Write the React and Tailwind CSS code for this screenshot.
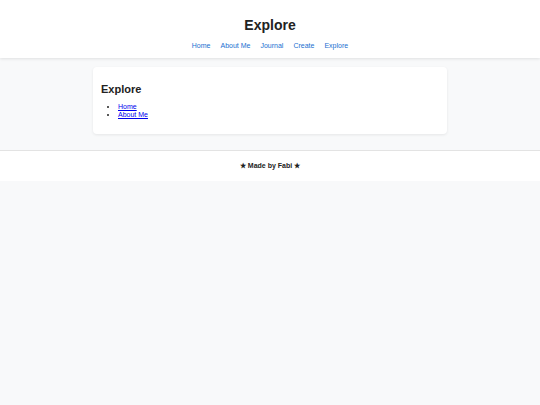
import React from "react";

const links = ["Home", "About Me", "Journal", "Create", "Explore"];

const App = () => {
  return (
    <div
      className="min-h-screen bg-[#f8f9fa] text-[#222]"
      style={{ fontFamily: '"Liberation Sans", Arial, sans-serif' }}
    >
      {/* header */}
      <header className="h-[58px] bg-white shadow-[0_1px_3px_rgba(0,0,0,0.1)] flex flex-col items-center pt-[16px] relative">
        <h1 className="text-[14px] leading-[18px] font-bold">Explore</h1>
        <nav className="mt-[7px] flex gap-x-[10px] text-[7px] leading-[9px]">
          {links.map((item, index) => (
            <a key={index} href="#" className="text-[#1a6fd0]">
              {item}
            </a>
          ))}
        </nav>
      </header>

      {/* main */}
      <main className="pt-[9px] pb-[16px]">
        <div className="w-[354px] mx-auto bg-white rounded-[4px] shadow-[0_1px_3px_rgba(0,0,0,0.08)] px-[8px] pt-[15px] pb-[15px]">
          <h2 className="text-[11px] leading-[14px] font-bold">Explore</h2>
          <ul className="mt-[7px] list-disc pl-[17px] text-[7px] leading-[8px]">
            <li>
              <a href="#" className="text-[#0000ee] underline">
                Home
              </a>
            </li>
            <li>
              <a href="#" className="text-[#0000ee] underline">
                About Me
              </a>
            </li>
          </ul>
        </div>
      </main>

      {/* footer */}
      <footer className="h-[31px] bg-white border-t border-[#e3e3e3] flex items-center justify-center">
        <p className="text-[7px] font-bold">★ Made by Fabi ★</p>
      </footer>
    </div>
  );
};

export default App;
